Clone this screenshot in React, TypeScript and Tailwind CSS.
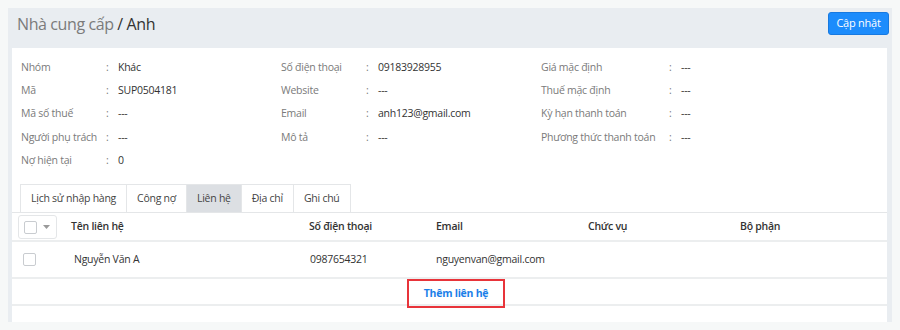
import React from 'react'

const col1 = [
  ['Nhóm', 'Khác'],
  ['Mã', 'SUP0504181'],
  ['Mã số thuế', '---'],
  ['Người phụ trách', '---'],
  ['Nợ hiện tại', '0'],
]
const col2 = [
  ['Số điện thoại', '09183928955'],
  ['Website', '---'],
  ['Email', 'anh123@gmail.com'],
  ['Mô tả', '---'],
]
const col3 = [
  ['Giá mặc định', '---'],
  ['Thuế mặc định', '---'],
  ['Kỳ hạn thanh toán', '---'],
  ['Phương thức thanh toán', '---'],
]

const tabs = ['Lịch sử nhập hàng', 'Công nợ', 'Liên hệ', 'Địa chỉ', 'Ghi chú']

function InfoCol({ rows, labelW, colW }: { rows: string[][]; labelW: string; colW: string }) {
  return (
    <div className={`flex flex-col ${colW}`}>
      {rows.map(([k, v]) => (
        <div key={k} className="flex items-center h-[23.3px]">
          <span className={`text-[#7a7a7a] ${labelW}`}>{k}</span>
          <span className="text-[#7a7a7a] w-[12px]">:</span>
          <span className="text-[#333]">{v}</span>
        </div>
      ))}
    </div>
  )
}

export default function App() {
  return (
    <div className="w-[900px] h-[330px] bg-[#f6f8f8] pt-2 pl-2 text-[10.5px] tracking-[-0.25px]" style={{ fontFamily: '"Open Sans", "Noto Sans", sans-serif' }}>
      <div className="w-[884px] h-[314px] bg-[#e9edf1] flex flex-col">
        <div className="h-[40px] flex items-start justify-between pl-[9px] pr-[3px]">
          <div className="text-[16px] mt-[4px] tracking-[-0.4px]">
            <span className="text-[#7b7b7b]">Nhà cung cấp</span>
            <span className="text-[#333]"> / Anh</span>
          </div>
          <button className="mt-[4px] h-[23px] w-[61px] rounded-[3px] bg-[#1c8cfc] text-white text-[11px] border border-[#1779e0]">
            Cập nhật
          </button>
        </div>
        <div className="ml-[4px] w-[875px] flex-1 bg-white flex flex-col">
          <div className="flex pl-[9px] pt-[8px]">
            <InfoCol rows={col1} labelW="w-[85px]" colW="w-[260px]" />
            <InfoCol rows={col2} labelW="w-[85px]" colW="w-[260px]" />
            <InfoCol rows={col3} labelW="w-[128px]" colW="w-[260px]" />
          </div>
          <div className="flex pl-[8px] mt-[12px] border-b border-[#e4e6e8]">
            {tabs.map((t) => (
              <div
                key={t}
                className={`h-[28px] flex items-center justify-center px-[10px] border-l border-t border-[#e4e6e8] last:border-r ${t === 'Liên hệ' ? 'bg-[#dcdfe3]' : 'bg-white'} text-[#444]`}
              >
                {t}
              </div>
            ))}
          </div>
          <div className="flex items-center h-[29px] border-b-2 border-[#eceeef] text-[#333] font-semibold">
            <div className="w-[59px] pl-[6px]">
              <div className="w-[39px] h-[24px] mt-[1px] border border-[#e4e6e8] rounded-[3px] flex items-center pl-[5px] gap-[6px]">
                <div className="w-[13px] h-[13px] border border-[#c9ccd0] rounded-[2px]" />
                <svg width="7" height="4" viewBox="0 0 7 4"><path d="M0 0h7L3.5 4z" fill="#9a9a9a" /></svg>
              </div>
            </div>
            <div className="w-[238px]">Tên liên hệ</div>
            <div className="w-[127px]">Số điện thoại</div>
            <div className="w-[152px]">Email</div>
            <div className="w-[152px]">Chức vụ</div>
            <div>Bộ phận</div>
          </div>
          <div className="flex items-center h-[37px] border-b-2 border-[#eceeef] text-[#333]">
            <div className="w-[62px] pl-[11px]">
              <div className="w-[13px] h-[13px] border border-[#c9ccd0] rounded-[2px]" />
            </div>
            <div className="w-[236px]">Nguyễn Văn A</div>
            <div className="w-[126px]">0987654321</div>
            <div>nguyenvan@gmail.com</div>
          </div>
          <div className="flex justify-center h-[27px] border-b-2 border-[#eceeef] pl-[13px]">
            <div className="w-[98px] h-[29px] border-2 border-[#e8343a] flex items-center justify-center text-[#1a7ee8] font-bold">
              Thêm liên hệ
            </div>
          </div>
        </div>
      </div>
    </div>
  )
}
